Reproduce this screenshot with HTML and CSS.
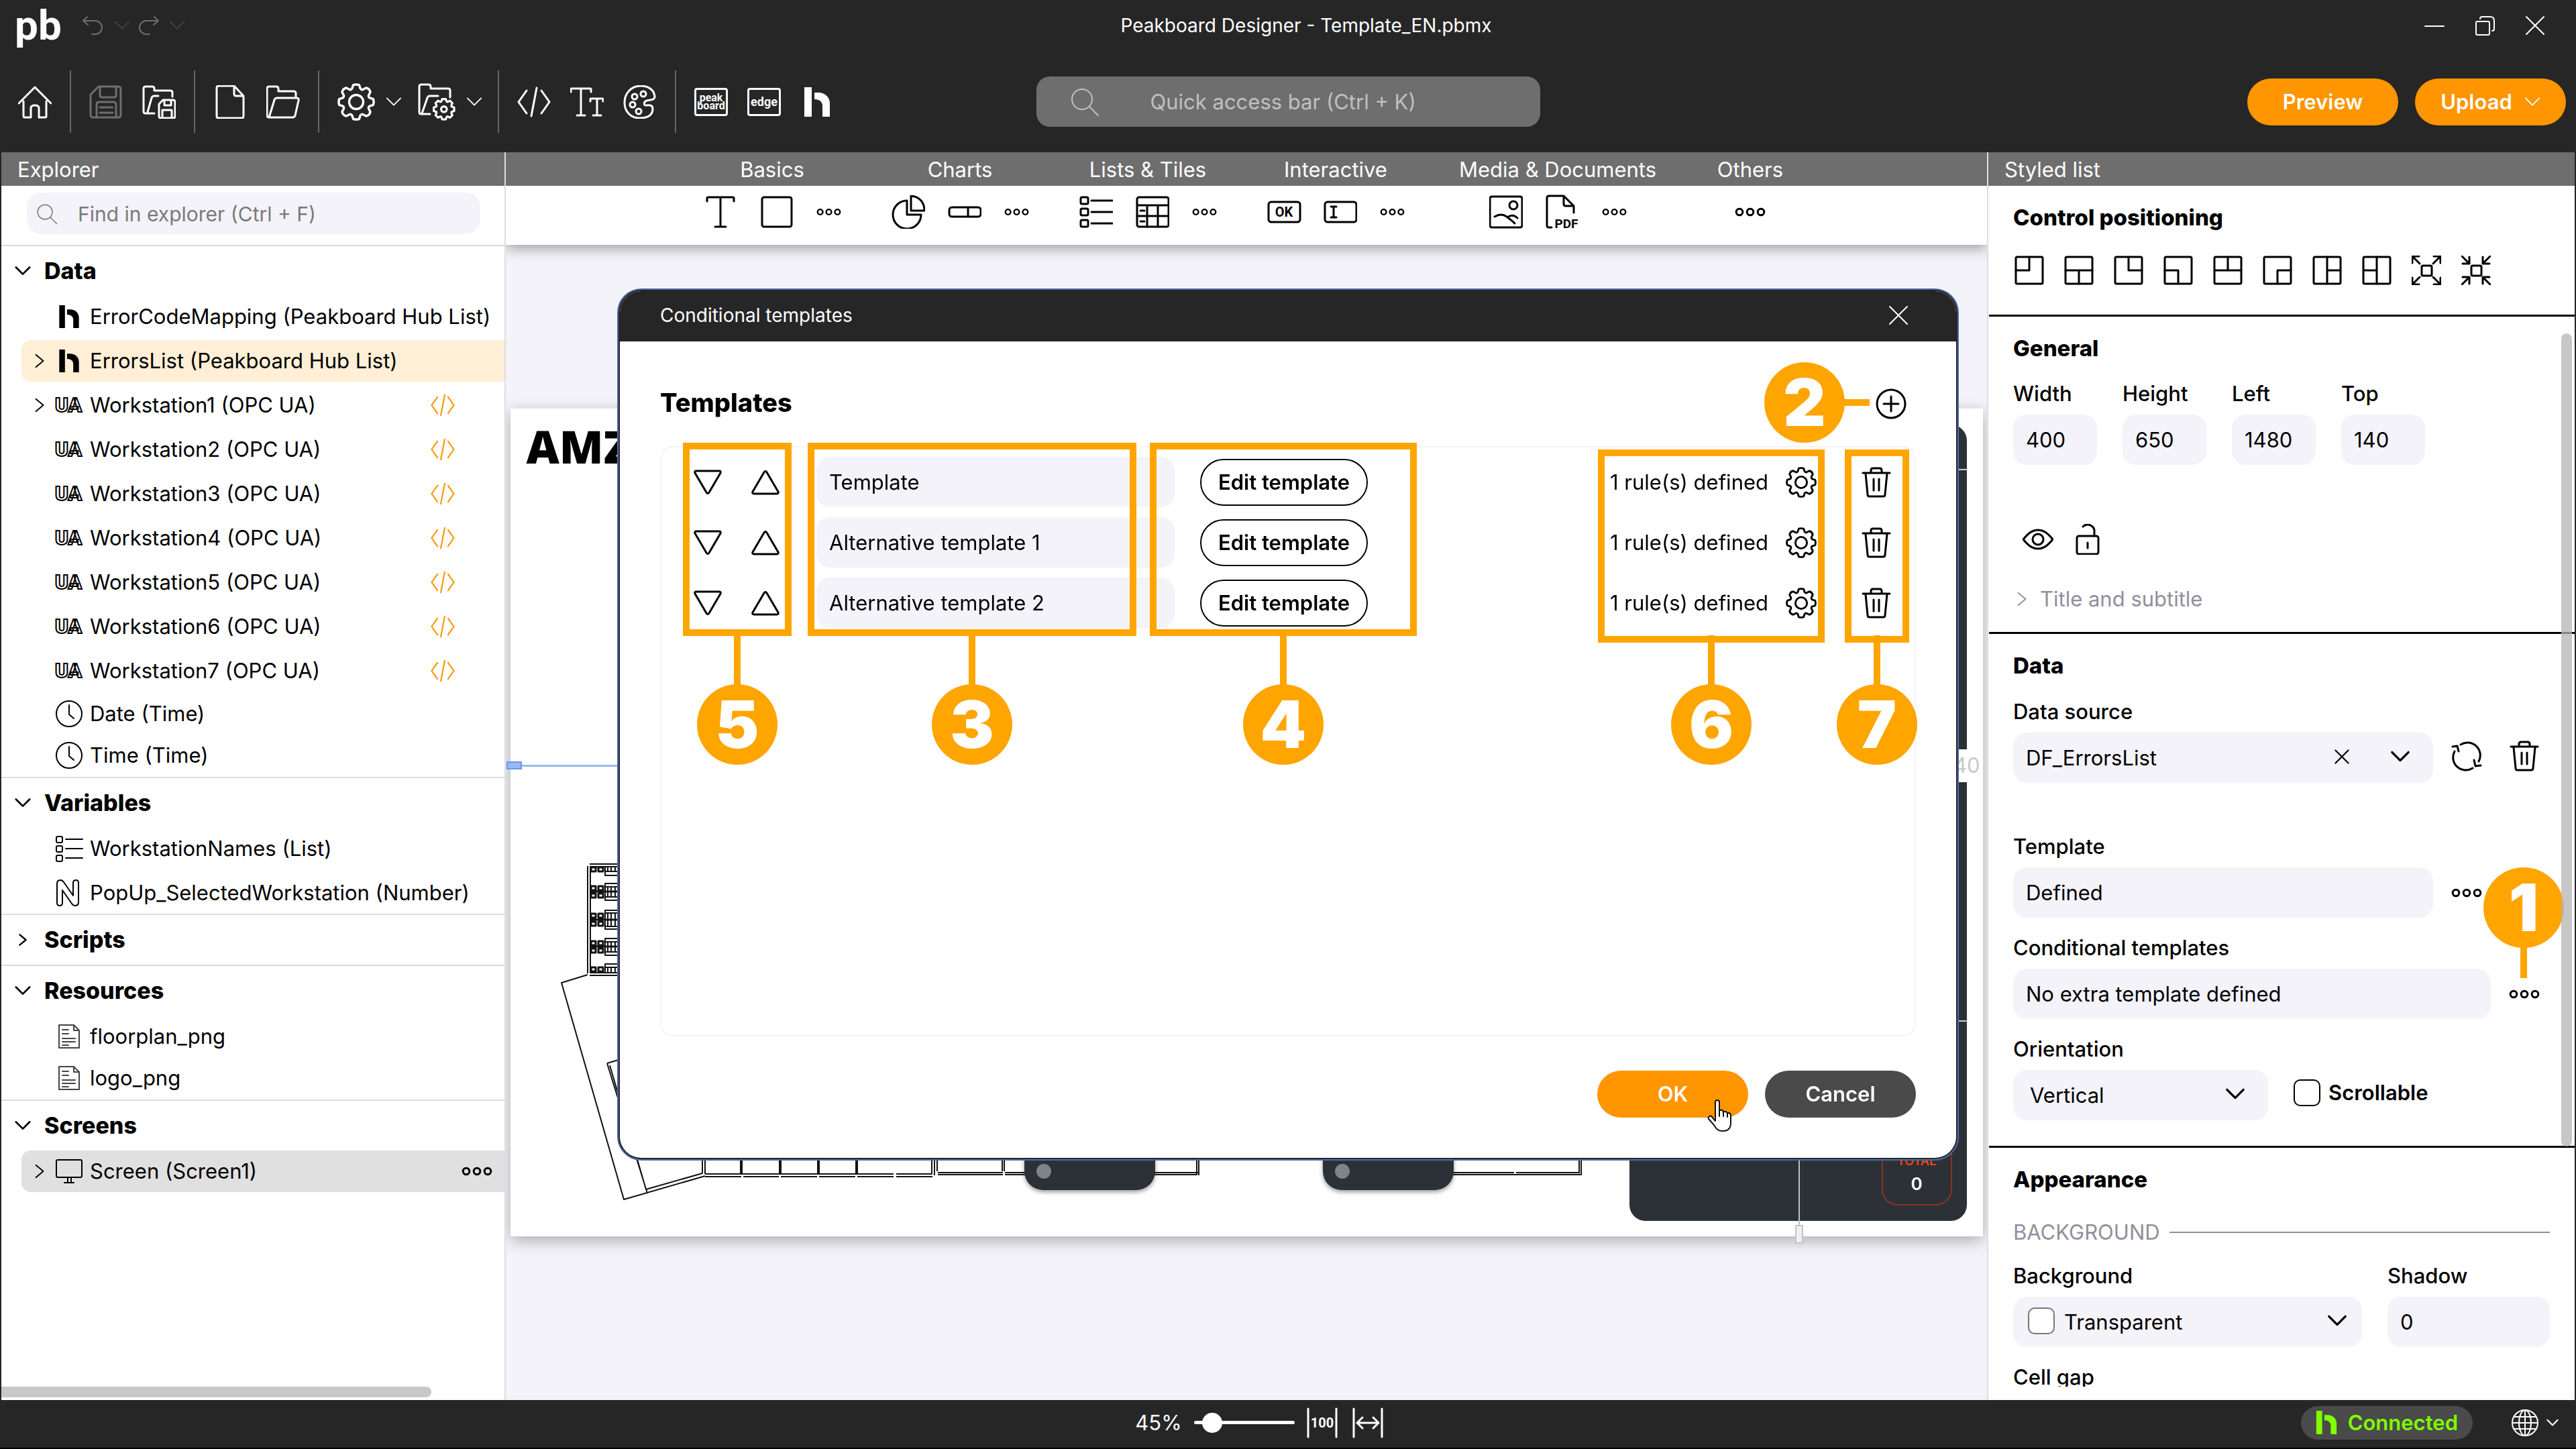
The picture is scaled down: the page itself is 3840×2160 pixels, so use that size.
FILE: index.html
```html
<!DOCTYPE html>
<html lang="en">
<head>
<meta charset="utf-8">
<title>Peakboard Designer - Template_EN.pbmx</title>
<link rel="stylesheet" href="styles.css">
</head>
<body>
<svg class="sprite" aria-hidden="true">
  <symbol id="chev-down" viewBox="0 0 26 18"><path d="M2 3l11 11L24 3"/></symbol>
  <symbol id="chev-right" viewBox="0 0 18 26"><path d="M3 3l12 10L3 23"/></symbol>
  <symbol id="undo" viewBox="0 0 34 30"><path d="M8 2L2 8l7 6M2 8h18a9 9 0 0 1 0 20h-5"/></symbol>
  <symbol id="redo" viewBox="0 0 34 30"><path d="M26 2l6 6-7 6M32 8H14a9 9 0 0 0 0 20h5"/></symbol>
  <symbol id="home" viewBox="0 0 50 50"><path d="M1 27L25 3l24 24M8 24v22q0 2 2 2h9V34q0-4 6-4t6 4v14h9q2 0 2-2V24"/></symbol>
  <symbol id="save" viewBox="0 0 50 50"><path d="M14 2h29q4 0 4 4v38q0 4-4 4H6q-4 0-4-4V14zM16 3v12q0 3 3 3h18q3 0 3-3V3M11 47V29q0-4 4-4h21q4 0 4 4v18M16 33h19M16 41h19"/></symbol>
  <symbol id="save-as" viewBox="0 0 50 50"><path d="M18 42H5q-3 0-3-3V5q0-3 3-3h10q3 0 3 3v3h24q3 0 3 3v6M8 40l6-21q1-3 4-3h6M31 22h15q3 0 3 3v21q0 3-3 3H28q-3 0-3-3V28zM33 23v7h10v-7M30 48V37h14v11"/></symbol>
  <symbol id="file" viewBox="0 0 50 50"><path d="M8 1h23l14 15v30q0 3-3 3H8q-3 0-3-3V4q0-3 3-3zM31 2v11q0 3 3 3h11"/></symbol>
  <symbol id="folder" viewBox="0 0 50 50"><path d="M4 48q-3 0-3-3V5q0-3 3-3h11q3 0 3 3v4h23q3 0 3 3v7M4 48l8-26q1-3 4-3h29q4 0 3 4l-5 22q-1 3-4 3H4z"/></symbol>
  <symbol id="gear" viewBox="0 0 48 48"><path d="M18.700 6.800L20.200 2.300Q24 1 27.800 2.300L29.300 6.800Q31 9 32.400 8.100L36.700 6Q41 7 42 11.300L39.900 15.600Q39.500 18 41.200 18.700L45.700 20.200Q47 24 45.700 27.800L41.200 29.300Q39.500 30 39.900 32.400L42 36.700Q41 41 36.700 42L32.400 39.900Q31 39 29.300 41.200L27.800 45.700Q24 47 20.200 45.700L18.700 41.200Q17 39 15.600 39.900L11.300 42Q7 41 6 36.700L8.100 32.400Q8.500 30 6.800 29.300L2.300 27.800Q1 24 2.300 20.200L6.800 18.700Q8.500 18 8.100 15.600L6 11.300Q7 7 11.300 6L15.600 8.100Q17 9 18.700 6.800z"/><circle cx="24" cy="24" r="9"/></symbol>
  <symbol id="folder-gear" viewBox="0 0 56 56"><path d="M18 46H5q-3 0-3-3V5q0-3 3-3h11q3 0 3 3v3h26q3 0 3 3v10M6 45l8-23q1-3 4-3h12"/><g transform="translate(22 22) scale(.7)"><path stroke-width="4.500" d="M18.700 6.800L20.200 2.300h7.600L29.300 6.800Q31 9 32.400 8.100L36.700 6 42 11.300 39.900 15.600Q39.500 18 41.200 18.700L45.700 20.200v7.600L41.200 29.300Q39.500 30 39.900 32.400L42 36.700 36.700 42 32.400 39.900Q31 39 29.300 41.200L27.800 45.700h-7.600L18.700 41.200Q17 39 15.600 39.900L11.300 42 6 36.700 8.100 32.400Q8.500 30 6.800 29.300L2.300 27.800v-7.600L6.800 18.700Q8.500 18 8.100 15.600L6 11.300 11.300 6 15.600 8.100Q17 9 18.700 6.800z"/><circle cx="24" cy="24" r="6" stroke-width="4.500"/></g></symbol>
  <symbol id="code" viewBox="0 0 50 50"><path d="M14 8L2 25l12 17M36 8l12 17-12 17M29 4L21 46"/></symbol>
  <symbol id="type" viewBox="0 0 50 50"><path d="M1 10V6q0-1 1-1h28q1 0 1 1v4M16 5v40M10 45h12M30 24v-3q0-1 1-1h17q1 0 1 1v3M40 20v25M34 45h12"/></symbol>
  <symbol id="palette" viewBox="0 0 50 50"><path d="M26 1C12 1 2 12 2 26s10 23 22 23c10 0 20-3 20-14 0-5-5-6-9-5-5 1-5-5 0-7 6-1 12-1 12-6C46 7 38 1 26 1z"/><circle cx="17" cy="17" r="4"/><circle cx="30" cy="13" r="4"/><circle cx="14" cy="29" r="4"/><circle cx="23" cy="39" r="4"/></symbol>
  <symbol id="hub" viewBox="0 0 40 44"><path class="solid" d="M1 0h11v44H1zM16 8h6c10 0 17 7 17 16v20H28V28c0-6-4-10-12-10z"/></symbol>
  <symbol id="search" viewBox="0 0 44 44"><circle cx="18" cy="18" r="15"/><path d="M29 29l13 13"/></symbol>
  <symbol id="dots" viewBox="0 0 46 14"><circle cx="7" cy="7" r="4.800"/><circle cx="23" cy="7" r="4.800"/><circle cx="39" cy="7" r="4.800"/></symbol>
  <symbol id="clock" viewBox="0 0 42 42"><circle cx="21" cy="21" r="19"/><path d="M21 8v14l7 6"/></symbol>
  <symbol id="num" viewBox="0 0 42 42"><path d="M3 7q0-5 5-5 3 0 5 3l14 20V6q0-4 4-4t4 4v29q0 5-5 5-3 0-5-3L11 17v19q0 4-4 4t-4-4z"/></symbol>
  <symbol id="list" viewBox="0 0 42 42"><rect x="2" y="3" width="9" height="9" rx="2"/><rect x="2" y="17" width="9" height="9" rx="2"/><rect x="2" y="31" width="9" height="9" rx="2"/><path d="M16 7h25M16 21h25M16 35h25"/></symbol>
  <symbol id="doc" viewBox="0 0 42 42"><path d="M6 4h22l8 8v26H6zM28 4v8h8M11 11h9M11 17h9M11 24h19M11 29h19M11 34h9"/></symbol>
  <symbol id="monitor" viewBox="0 0 42 42"><rect x="2" y="4" width="38" height="26" rx="2"/><path d="M19 30v7M24 30v7M14 38h14"/></symbol>
  <symbol id="t-text" viewBox="0 0 50 50"><path d="M5 9V4q0-1 2-1h36q2 0 2 1v5M25 3v44M17 47h16"/></symbol>
  <symbol id="t-rect" viewBox="0 0 50 50"><rect x="3" y="3" width="44" height="44" rx="3"/></symbol>
  <symbol id="t-pie" viewBox="0 0 50 50"><path d="M23 8a21 21 0 1 0 21 21H23zM29 1v22h20C49 10 41 2 29 1z"/></symbol>
  <symbol id="t-bar" viewBox="0 0 50 50"><rect x="2" y="18" width="47" height="14" rx="4"/><path d="M30 18v14"/></symbol>
  <symbol id="t-list" viewBox="0 0 50 50"><rect x="2" y="3" width="11" height="10" rx="2"/><rect x="2" y="20" width="11" height="10" rx="2"/><rect x="2" y="37" width="11" height="10" rx="2"/><path d="M18 8h31M18 25h31M18 42h31"/></symbol>
  <symbol id="t-table" viewBox="0 0 50 50"><rect x="2" y="3" width="47" height="44" rx="3"/><path d="M2 15h47M2 31h47M17 15v32M33 15v32M7 23h6M7 39h6"/></symbol>
  <symbol id="t-input" viewBox="0 0 50 50"><rect x="2" y="10" width="47" height="30" rx="4"/><path d="M15 17v16M11 17h8M11 33h8"/></symbol>
  <symbol id="t-image" viewBox="0 0 50 50"><rect x="1" y="2" width="48" height="46" rx="3"/><circle cx="36" cy="15" r="6"/><path d="M8 32q10-6 18 0t12 10M27 33q8-6 15 1"/></symbol>
  <symbol id="p-tl" viewBox="0 0 44 44"><rect x="2" y="2" width="40" height="40" rx="2"/><path d="M22 2v20H2"/></symbol>
  <symbol id="p-b" viewBox="0 0 44 44"><rect x="2" y="2" width="40" height="40" rx="2"/><path d="M2 22h40M22 22v20"/></symbol>
  <symbol id="p-tr" viewBox="0 0 44 44"><rect x="2" y="2" width="40" height="40" rx="2"/><path d="M22 2v20h20"/></symbol>
  <symbol id="p-bl" viewBox="0 0 44 44"><rect x="2" y="2" width="40" height="40" rx="2"/><path d="M2 22h20v20"/></symbol>
  <symbol id="p-t" viewBox="0 0 44 44"><rect x="2" y="2" width="40" height="40" rx="2"/><path d="M2 22h40M22 2v20"/></symbol>
  <symbol id="p-br" viewBox="0 0 44 44"><rect x="2" y="2" width="40" height="40" rx="2"/><path d="M42 22H22v20"/></symbol>
  <symbol id="p-r" viewBox="0 0 44 44"><rect x="2" y="2" width="40" height="40" rx="2"/><path d="M22 2v40M22 22h20"/></symbol>
  <symbol id="p-l" viewBox="0 0 44 44"><rect x="2" y="2" width="40" height="40" rx="2"/><path d="M22 2v40M2 22h20"/></symbol>
  <symbol id="p-out" viewBox="0 0 44 44"><rect x="15" y="15" width="15" height="15" rx="2"/><path d="M1 11V1h10M1 1l11 11M33 1h10v10M43 1L32 12M1 33v10h10M1 43l11-11M43 33v10H33M43 43L32 32"/></symbol>
  <symbol id="p-in" viewBox="0 0 44 44"><rect x="15" y="15" width="15" height="15" rx="2"/><path d="M2 12h10V2M12 12L1 1M42 12H32V2M32 12L43 1M2 32h10v10M12 32L1 43M42 32H32v10M32 32l11 11"/></symbol>
  <symbol id="eye" viewBox="0 0 46 46"><path d="M1 23C10 12 16 9 23 9s13 3 22 14c-9 11-15 14-22 14S10 34 1 23z"/><circle cx="23" cy="23" r="8"/></symbol>
  <symbol id="lock" viewBox="0 0 46 46"><rect x="7" y="18" width="32" height="27" rx="3"/><path d="M33 18v-6a10 10 0 0 0-17-8M23 28v8"/></symbol>
  <symbol id="refresh" viewBox="0 0 46 46"><path d="M32 41A19 19 0 0 1 5 16M14 6a19 19 0 0 1 27 25M2 9l7-1 2 8M44 37l-8 1-2-9"/></symbol>
  <symbol id="trash" viewBox="0 0 46 46"><path d="M3 9h40M15 8V5q0-3 3-3h10q3 0 3 3v3M7 10l3 31q0 3 3 3h20q3 0 3-3l3-31M19 18v17M27 18v17"/></symbol>
  <symbol id="cross" viewBox="0 0 30 30"><path d="M2 2l26 26M28 2L2 28"/></symbol>
  <symbol id="plus" viewBox="0 0 46 46"><circle cx="23" cy="23" r="21"/><path d="M23 12v22M12 23h22"/></symbol>
  <symbol id="tri-down" viewBox="0 0 42 38"><path d="M4 2h34q3 0 2 3L23 34q-2 3-4 0L2 5q-1-3 2-3z"/></symbol>
  <symbol id="tri-up" viewBox="0 0 42 38"><path d="M4 36h34q3 0 2-3L23 4q-2-3-4 0L2 33q-1 3 2 3z"/></symbol>
  <symbol id="min" viewBox="0 0 30 30"><path d="M1 16h28"/></symbol>
  <symbol id="restore" viewBox="0 0 30 30"><rect x="2" y="9" width="20" height="20" rx="2"/><path d="M8 5q0-3 3-3h12q6 0 6 6v12q0 3-3 3"/></symbol>
  <symbol id="zfit" viewBox="0 0 46 46"><path d="M2 2v42M44 2v42M7 23h32M15 15l-8 8 8 8M31 15l8 8-8 8"/></symbol>
  <symbol id="globe" viewBox="0 0 42 42"><circle cx="21" cy="21" r="19"/><ellipse cx="21" cy="21" rx="9" ry="19"/><path d="M21 2v38M2 21h38M5 12h32M5 30h32"/></symbol>
</svg>

<header class="top">
  <div class="titlebar">
    <div class="titlebar-left">
      <span class="logo">pb</span>
      <button class="icon-btn dim" aria-label="Undo"><svg class="i34"><use href="#undo"/></svg><svg class="chev"><use href="#chev-down"/></svg></button>
      <button class="icon-btn dim" aria-label="Redo"><svg class="i34"><use href="#redo"/></svg><svg class="chev"><use href="#chev-down"/></svg></button>
    </div>
    <div class="app-title">Peakboard Designer - Template_EN.pbmx</div>
    <div class="window-buttons">
      <button class="icon-btn" aria-label="Minimize"><svg class="i30"><use href="#min"/></svg></button>
      <button class="icon-btn" aria-label="Restore"><svg class="i30"><use href="#restore"/></svg></button>
      <button class="icon-btn" aria-label="Close"><svg class="i30"><use href="#cross"/></svg></button>
    </div>
  </div>
  <div class="toolbar">
    <div class="tool-groups">
      <div class="tool-group"><button class="icon-btn" aria-label="Home"><svg class="i50"><use href="#home"/></svg></button></div>
      <div class="tool-group"><button class="icon-btn dim" aria-label="Save"><svg class="i50"><use href="#save"/></svg></button><button class="icon-btn" aria-label="Save as"><svg class="i50"><use href="#save-as"/></svg></button></div>
      <div class="tool-group"><button class="icon-btn" aria-label="New"><svg class="i50"><use href="#file"/></svg></button><button class="icon-btn" aria-label="Open"><svg class="i50"><use href="#folder"/></svg></button></div>
      <div class="tool-group tool-group--menus"><button class="icon-btn menu" aria-label="Settings"><svg class="i56"><use href="#gear"/></svg><svg class="chev"><use href="#chev-down"/></svg></button><button class="icon-btn menu" aria-label="Project settings"><svg class="i56"><use href="#folder-gear"/></svg><svg class="chev"><use href="#chev-down"/></svg></button></div>
      <div class="tool-group"><button class="icon-btn" aria-label="Script"><svg class="i50"><use href="#code"/></svg></button><button class="icon-btn" aria-label="Fonts"><svg class="i50"><use href="#type"/></svg></button><button class="icon-btn" aria-label="Colors"><svg class="i50"><use href="#palette"/></svg></button></div>
      <div class="tool-group tool-group--last"><button class="icon-btn tile" aria-label="Peakboard"><span>peak</span><span>board</span></button><button class="icon-btn tile tile--edge" aria-label="Edge"><span>edge</span></button><button class="icon-btn" aria-label="Hub"><svg class="i50 hub-lg"><use href="#hub"/></svg></button></div>
    </div>
    <label class="quick"><svg class="i44"><use href="#search"/></svg><input type="text" placeholder="Quick access bar (Ctrl + K)" aria-label="Quick access bar"></label>
    <div class="actions">
      <button class="pill orange">Preview</button>
      <button class="pill orange">Upload <svg class="chev"><use href="#chev-down"/></svg></button>
    </div>
  </div>
</header>

<main class="work">
  <aside class="explorer">
    <h2 class="panel-title">Explorer</h2>
    <div class="find"><label class="find-box"><svg class="i32"><use href="#search"/></svg><input type="text" placeholder="Find in explorer (Ctrl + F)" aria-label="Find in explorer"></label></div>
    <section class="tree">
      <h3><svg class="chev"><use href="#chev-down"/></svg>Data</h3>
      <ul class="loose">
        <li><svg class="tw"></svg><svg class="i42 hub"><use href="#hub"/></svg><span>ErrorCodeMapping (Peakboard Hub List)</span></li>
        <li class="picked"><svg class="tw"><use href="#chev-right"/></svg><svg class="i42 hub"><use href="#hub"/></svg><span>ErrorsList (Peakboard Hub List)</span></li>
        <li><svg class="tw"><use href="#chev-right"/></svg><b class="ua">UA</b><span>Workstation1 (OPC UA)</span><button class="icon-btn code" aria-label="Script"><svg class="i36"><use href="#code"/></svg></button></li>
        <li><svg class="tw"></svg><b class="ua">UA</b><span>Workstation2 (OPC UA)</span><button class="icon-btn code" aria-label="Script"><svg class="i36"><use href="#code"/></svg></button></li>
        <li><svg class="tw"></svg><b class="ua">UA</b><span>Workstation3 (OPC UA)</span><button class="icon-btn code" aria-label="Script"><svg class="i36"><use href="#code"/></svg></button></li>
        <li><svg class="tw"></svg><b class="ua">UA</b><span>Workstation4 (OPC UA)</span><button class="icon-btn code" aria-label="Script"><svg class="i36"><use href="#code"/></svg></button></li>
        <li><svg class="tw"></svg><b class="ua">UA</b><span>Workstation5 (OPC UA)</span><button class="icon-btn code" aria-label="Script"><svg class="i36"><use href="#code"/></svg></button></li>
        <li><svg class="tw"></svg><b class="ua">UA</b><span>Workstation6 (OPC UA)</span><button class="icon-btn code" aria-label="Script"><svg class="i36"><use href="#code"/></svg></button></li>
        <li><svg class="tw"></svg><b class="ua">UA</b><span>Workstation7 (OPC UA)</span><button class="icon-btn code" aria-label="Script"><svg class="i36"><use href="#code"/></svg></button></li>
      </ul>
      <ul class="tight">
        <li><svg class="tw"></svg><svg class="i42"><use href="#clock"/></svg><span>Date (Time)</span></li>
        <li><svg class="tw"></svg><svg class="i42"><use href="#clock"/></svg><span>Time (Time)</span></li>
      </ul>
    </section>
    <section class="tree">
      <h3><svg class="chev"><use href="#chev-down"/></svg>Variables</h3>
      <ul class="loose">
        <li><svg class="tw"></svg><svg class="i42"><use href="#list"/></svg><span>WorkstationNames (List)</span></li>
        <li><svg class="tw"></svg><svg class="i42"><use href="#num"/></svg><span>PopUp_SelectedWorkstation (Number)</span></li>
      </ul>
    </section>
    <section class="tree">
      <h3><svg class="chev"><use href="#chev-right"/></svg>Scripts</h3>
    </section>
    <section class="tree">
      <h3><svg class="chev"><use href="#chev-down"/></svg>Resources</h3>
      <ul class="tight">
        <li><svg class="tw"></svg><svg class="i42 docs"><use href="#doc"/></svg><span>floorplan_png</span></li>
        <li><svg class="tw"></svg><svg class="i42 docs"><use href="#doc"/></svg><span>logo_png</span></li>
      </ul>
    </section>
    <section class="tree tree--last">
      <h3><svg class="chev"><use href="#chev-down"/></svg>Screens</h3>
      <ul>
        <li class="current"><svg class="tw"><use href="#chev-right"/></svg><svg class="i42"><use href="#monitor"/></svg><span>Screen (Screen1)</span><button class="icon-btn more" aria-label="More"><svg class="dots"><use href="#dots"/></svg></button></li>
      </ul>
    </section>
    <div class="hscroll"></div>
  </aside>

  <section class="canvas">
    <nav class="ribbon">
      <div class="ribbon-group"><h2>Basics</h2><div class="ribbon-tools"><svg class="i50"><use href="#t-text"/></svg><svg class="i50"><use href="#t-rect"/></svg><svg class="dots-sm"><use href="#dots"/></svg></div></div>
      <div class="ribbon-group"><h2>Charts</h2><div class="ribbon-tools"><svg class="i50"><use href="#t-pie"/></svg><svg class="i50"><use href="#t-bar"/></svg><svg class="dots-sm"><use href="#dots"/></svg></div></div>
      <div class="ribbon-group"><h2>Lists &amp; Tiles</h2><div class="ribbon-tools"><svg class="i50"><use href="#t-list"/></svg><svg class="i50"><use href="#t-table"/></svg><svg class="dots-sm"><use href="#dots"/></svg></div></div>
      <div class="ribbon-group"><h2>Interactive</h2><div class="ribbon-tools"><svg class="i50" viewBox="0 0 50 50"><rect x="2" y="10" width="47" height="30" rx="4"/><text class="glyph" x="25" y="32" font-size="20">OK</text></svg><svg class="i50"><use href="#t-input"/></svg><svg class="dots-sm"><use href="#dots"/></svg></div></div>
      <div class="ribbon-group ribbon-group--wide"><h2>Media &amp; Documents</h2><div class="ribbon-tools"><svg class="i50"><use href="#t-image"/></svg><svg class="i50" viewBox="0 0 50 50"><path d="M9 48H5q-3 0-3-3V4q0-3 3-3h22l15 15v10M27 1v12q0 3 3 3h12"/><text class="glyph" x="31" y="49" font-size="19">PDF</text></svg><svg class="dots-sm"><use href="#dots"/></svg></div></div>
      <div class="ribbon-group ribbon-group--slim"><h2>Others</h2><div class="ribbon-tools"><svg class="dots"><use href="#dots"/></svg></div></div>
    </nav>
    <div class="stage">
      <div class="board">
        <svg class="plan" viewBox="760 609 2195 1234">
          <g fill="none" stroke="#111" stroke-width="2">
            <path d="M875 1453l-39 12 93 323 121-35M875 1291v160M879 1293v157M878 1288h60M878 1292h60M878 1450h60M878 1454h60"/>
            <path d="M904 1585l60 194M908 1588l54 185 84-24v-40M904 1585l40-12M1050 1709v41M1050 1750h281M1335 1750h53v-41M1050 1754h54M1107 1754h53M1163 1754h54M1220 1754h54M1277 1754h54M1335 1754h54"/>
            <path d="M1392 1709v43M1396 1709v37M1397 1748h97M1397 1751h97M1493 1709v37M1496 1709v37M1497 1748h289M1497 1751h285M1783 1709v43M1786 1709v43M2160 1748h96M2259 1748h94M2160 1751h196v-42M2353 1709v40"/>
            <path stroke-width="4" d="M1104 1709v41M1162 1709v41M1219 1709v41M1276 1709v41"/>
            <path stroke-width="3" d="M880 1293h7v6h-7zM891 1293h7v6h-7zM880 1321h7v6h-7zM891 1321h7v6h-7zM880 1332h7v6h-7zM891 1332h7v6h-7zM880 1362h7v6h-7zM891 1362h7v6h-7zM880 1374h7v6h-7zM891 1374h7v6h-7zM880 1403h7v6h-7zM891 1403h7v6h-7zM880 1414h7v6h-7zM891 1414h7v6h-7zM880 1442h7v6h-7zM891 1442h7v6h-7zM879 1329h60M879 1371h60M879 1411h60"/>
            <path d="M901 1292v13h30M901 1299h30M905 1292v8M910 1292v8M916 1292v8M930 1317h-29v25h29M901 1322h30M901 1337h30M905 1322v15M910 1322v15M916 1322v15M930 1357h-29v28h29M901 1361h30M901 1381h30M905 1361v20M910 1361v20M916 1361v20M930 1399h-29v25h29M901 1404h30M901 1419h30M905 1404v15M910 1404v15M916 1404v15M930 1437h-29v12M901 1442h30M905 1442v8M910 1442v8M916 1442v8"/>
          </g>
        </svg>
        <div class="board-title">AMZ</div>
        <div class="station station--a"><i></i></div>
        <div class="station station--b"><i></i></div>
        <div class="side-panel"><div class="total"><span>TOTAL</span><b>0</b></div></div>
        <div class="guide-x"></div><div class="handle-x"></div>
        <div class="guide-y"></div><div class="handle-y"></div>
        <div class="distance">40</div>
      </div>
    </div>
  </section>

  <aside class="props">
    <h2 class="panel-title">Styled list</h2>
    <section class="block block--position">
      <h3>Control positioning</h3>
      <div class="positions">
        <button class="icon-btn" aria-label="Top left"><svg class="i44"><use href="#p-tl"/></svg></button><button class="icon-btn" aria-label="Bottom"><svg class="i44"><use href="#p-b"/></svg></button><button class="icon-btn" aria-label="Top right"><svg class="i44"><use href="#p-tr"/></svg></button><button class="icon-btn" aria-label="Bottom left"><svg class="i44"><use href="#p-bl"/></svg></button><button class="icon-btn" aria-label="Top"><svg class="i44"><use href="#p-t"/></svg></button><button class="icon-btn" aria-label="Bottom right"><svg class="i44"><use href="#p-br"/></svg></button><button class="icon-btn" aria-label="Right"><svg class="i44"><use href="#p-r"/></svg></button><button class="icon-btn" aria-label="Left"><svg class="i44"><use href="#p-l"/></svg></button><button class="icon-btn" aria-label="Expand"><svg class="i44"><use href="#p-out"/></svg></button><button class="icon-btn" aria-label="Shrink"><svg class="i44"><use href="#p-in"/></svg></button>
      </div>
    </section>
    <div class="props-scroll">
      <section class="block block--general">
        <h3>General</h3>
        <div class="quad">
          <div class="field"><label for="w">Width</label><input class="box" id="w" value="400"></div>
          <div class="field"><label for="h">Height</label><input class="box" id="h" value="650"></div>
          <div class="field"><label for="l">Left</label><input class="box" id="l" value="1480"></div>
          <div class="field"><label for="t">Top</label><input class="box" id="t" value="140"></div>
        </div>
        <div class="toggles"><button class="icon-btn" aria-label="Visible"><svg class="i46"><use href="#eye"/></svg></button><button class="icon-btn" aria-label="Unlocked"><svg class="i46"><use href="#lock"/></svg></button></div>
        <button class="fold"><svg class="tw"><use href="#chev-right"/></svg>Title and subtitle</button>
      </section>
      <section class="block block--data">
        <h3>Data</h3>
        <div class="field field--source"><label for="ds">Data source</label>
          <div class="line"><div class="select"><select class="box" id="ds"><option>DF_ErrorsList</option></select><button class="clear icon-btn" aria-label="Clear"><svg class="i22"><use href="#cross"/></svg></button><svg class="caret"><use href="#chev-down"/></svg></div><button class="icon-btn" aria-label="Reload"><svg class="i46"><use href="#refresh"/></svg></button><button class="icon-btn" aria-label="Delete"><svg class="i46"><use href="#trash"/></svg></button></div></div>
        <div class="field"><label for="tp">Template</label>
          <div class="line line--template"><input class="box" id="tp" value="Defined"><button class="icon-btn" aria-label="Edit template"><svg class="dots"><use href="#dots"/></svg></button></div></div>
        <div class="field"><label for="ct">Conditional templates</label>
          <div class="line"><input class="box" id="ct" value="No extra template defined"><button class="icon-btn marked" aria-label="Edit conditional templates"><svg class="dots"><use href="#dots"/></svg><span class="badge badge--1">1</span></button></div></div>
        <div class="field"><label for="or">Orientation</label>
          <div class="line line--orient"><div class="select select--short"><select class="box" id="or"><option>Vertical</option></select><svg class="caret"><use href="#chev-down"/></svg></div><label class="check"><input type="checkbox">Scrollable</label></div></div>
      </section>
      <section class="block block--look">
        <h3>Appearance</h3>
        <div class="rule-title"><span>BACKGROUND</span></div>
        <div class="pair">
          <div class="field"><label for="bg">Background</label><div class="select select--swatch"><span class="swatch"></span><select class="box" id="bg"><option>Transparent</option></select><svg class="caret"><use href="#chev-down"/></svg></div></div>
          <div class="field"><label for="sh">Shadow</label><input class="box" id="sh" value="0"></div>
        </div>
        <div class="field"><label for="cg">Cell gap</label></div>
      </section>
      <div class="vscroll"></div>
    </div>
  </aside>
</main>

<footer class="status">
  <div class="zoom"><label for="zoom">45%</label><input id="zoom" type="range" min="0" max="100" value="10"><button class="icon-btn" aria-label="Actual size"><svg class="i46" viewBox="0 0 46 46"><path d="M2 2v42M44 2v42"/><text class="glyph" x="23" y="30" font-size="20">100</text></svg></button><button class="icon-btn" aria-label="Fit"><svg class="i46"><use href="#zfit"/></svg></button></div>
  <div class="status-right"><span class="connected"><svg class="hub-sm"><use href="#hub"/></svg>Connected</span><button class="icon-btn lang" aria-label="Language"><svg class="i42"><use href="#globe"/></svg><svg class="chev-sm"><use href="#chev-down"/></svg></button></div>
</footer>

<div class="dialog" role="dialog" aria-label="Conditional templates">
  <div class="dialog-inner">
    <header class="dialog-head"><span>Conditional templates</span><button class="icon-btn" aria-label="Close"><svg class="i30"><use href="#cross"/></svg></button></header>
    <div class="dialog-body">
      <div class="dialog-title"><h2>Templates</h2><button class="icon-btn" aria-label="Add template"><svg class="i46"><use href="#plus"/></svg></button></div>
      <ul class="templates">
        <li><button class="icon-btn" aria-label="Move down"><svg class="tri"><use href="#tri-down"/></svg></button><button class="icon-btn up" aria-label="Move up"><svg class="tri"><use href="#tri-up"/></svg></button><input class="box name" aria-label="Template name" value="Template"><button class="edit">Edit template</button><span class="rules">1 rule(s) defined</span><button class="icon-btn" aria-label="Rules"><svg class="i46"><use href="#gear"/></svg></button><button class="icon-btn del" aria-label="Delete"><svg class="i46"><use href="#trash"/></svg></button></li>
        <li><button class="icon-btn" aria-label="Move down"><svg class="tri"><use href="#tri-down"/></svg></button><button class="icon-btn up" aria-label="Move up"><svg class="tri"><use href="#tri-up"/></svg></button><input class="box name" aria-label="Template name" value="Alternative template 1"><button class="edit">Edit template</button><span class="rules">1 rule(s) defined</span><button class="icon-btn" aria-label="Rules"><svg class="i46"><use href="#gear"/></svg></button><button class="icon-btn del" aria-label="Delete"><svg class="i46"><use href="#trash"/></svg></button></li>
        <li><button class="icon-btn" aria-label="Move down"><svg class="tri"><use href="#tri-down"/></svg></button><button class="icon-btn up" aria-label="Move up"><svg class="tri"><use href="#tri-up"/></svg></button><input class="box name" aria-label="Template name" value="Alternative template 2"><button class="edit">Edit template</button><span class="rules">1 rule(s) defined</span><button class="icon-btn" aria-label="Rules"><svg class="i46"><use href="#gear"/></svg></button><button class="icon-btn del" aria-label="Delete"><svg class="i46"><use href="#trash"/></svg></button></li>
      </ul>
      <div class="dialog-actions"><button class="pill orange">OK</button><button class="pill grey">Cancel</button></div>
    </div>
  </div>
  <div class="frame frame--5"><span class="badge">5</span></div>
  <div class="frame frame--3"><span class="badge">3</span></div>
  <div class="frame frame--4"><span class="badge">4</span></div>
  <div class="frame frame--6"><span class="badge">6</span></div>
  <div class="frame frame--7"><span class="badge">7</span></div>
  <span class="badge badge--2">2</span>
  <svg class="pointer" viewBox="0 0 36 48"><path d="M12 26V4c0-4 6-4 6 0v13c1-2 6-2 6 2 1-2 6-1 6 2 1-2 5-1 5 3v11c0 8-4 12-12 12-8 0-10-4-13-9L2 29c-2-3 3-6 5-3l5 6z" fill="#fff" stroke="#111" stroke-width="2"/><path d="M18 16v9M24 19v6M30 21v5" stroke="#111" stroke-width="2"/></svg>
</div>
</body>
</html>
```
FILE: styles.css
```css
* { box-sizing: border-box; }
body {
  margin: 0;
  height: 100vh;
  display: flex;
  flex-direction: column;
  background: #262626;
  color: #000;
  font: 400 31px/40px Inter, "Liberation Sans", sans-serif;
  overflow: hidden;
}
h2, h3, ul { margin: 0; padding: 0; font-size: inherit; }
ul { list-style: none; }
button, input, select { font: inherit; color: inherit; border: 0; background: none; padding: 0; margin: 0; }
svg { flex: none; display: block; fill: none; stroke: currentColor; stroke-width: 3; stroke-linecap: round; stroke-linejoin: round; }
.sprite { position: absolute; width: 0; height: 0; }
.solid { fill: currentColor; stroke: none; }
.glyph { fill: currentColor; stroke: none; font-family: Roboto, sans-serif; font-weight: 700; text-anchor: middle; }
.i22 { width: 22px; height: 22px; }
.i30 { width: 30px; height: 30px; stroke-width: 2; }
.i32 { width: 32px; height: 32px; }
.i34 { width: 34px; height: 30px; stroke-width: 2; }
.i36 { width: 36px; height: 36px; }
.i42 { width: 42px; height: 42px; stroke-width: 2; }
.i44 { width: 44px; height: 44px; }
.i46 { width: 46px; height: 46px; }
.i50 { width: 50px; height: 50px; overflow: visible; }
.i56 { width: 56px; height: 56px; }
.chev { width: 24px; height: 18px; stroke-width: 2; }
.chev-sm { width: 18px; height: 14px; }
.caret { width: 30px; height: 20px; }
.tw { width: 18px; height: 24px; stroke-width: 2; }
.dots { width: 46px; height: 14px; }
.dots-sm { width: 37px; height: 12px; }
.icon-btn { display: flex; align-items: center; flex: none; }

/* Header */
.top { flex: none; color: #fff; }
.titlebar { display: grid; grid-template-columns: 1fr auto 1fr; align-items: center; height: 76px; }
.titlebar-left { display: flex; align-items: center; gap: 10px; padding-left: 22px; }
.titlebar-left .icon-btn { gap: 14px; }
.logo { font: 700 62px/60px Roboto, sans-serif; padding-right: 20px; }
.dim { color: #6e6e6e; }
.dim .chev { color: #444; }
.app-title { padding-left: 54px; font-size: 28px; }
.window-buttons { display: flex; justify-content: flex-end; gap: 45px; padding-right: 46px; }
.toolbar { display: grid; grid-template-columns: 1fr 751px 1fr; align-items: center; height: 151px; }
.tool-groups { display: flex; }
.tool-group { display: flex; align-items: center; gap: 29px; height: 93px; padding: 0 27px; border-right: 2px solid #666; }
.tool-group--menus { gap: 24px; padding-right: 23px; }
.tool-group--last { border: 0; }
.menu { gap: 16px; }
.hub-lg { height: 44px; }
.tile { flex-direction: column; justify-content: center; width: 50px; height: 42px; border: 3px solid #fff; border-radius: 4px; font: 700 16px/12px Roboto, sans-serif; }
.tile--edge { font-size: 18px; }
.quick { display: flex; align-items: center; height: 75px; padding-left: 50px; gap: 76px; border-radius: 20px; background: #6e6e6e; color: #c0c0c0; }
.quick svg { stroke-width: 2; }
.quick input { flex: 1; min-width: 0; }
input::placeholder { color: inherit; opacity: 1; }
.actions { display: flex; justify-content: flex-end; gap: 25px; padding-right: 15px; }
.pill { display: flex; align-items: center; justify-content: center; gap: 18px; width: 225px; height: 70px; border-radius: 35px; color: #fff; font-weight: 600; }
.orange { background: #ff9500; }
.grey { background: #4a4a4a; }

/* Work area */
.work { flex: 1; min-height: 0; display: flex; margin: 0 2px; }
.panel-title { flex: none; height: 50px; padding: 6px 24px; background: #6e6e6e; color: #fff; font-weight: 400; }
.explorer { position: relative; flex: none; width: 752px; display: flex; flex-direction: column; background: #fff; border-right: 2px solid #dedde3; }
.find { padding: 10px 36px 16px 38px; border-bottom: 2px solid #dcdcdc; }
.find-box { display: flex; align-items: center; gap: 30px; height: 62px; padding: 2px 0 0 14px; border-radius: 22px; background: #f4f3f9; color: #7a7a7a; font-size: 30px; }
.find-box input { flex: 1; min-width: 0; }
.find-box svg { stroke-width: 2; }
.tree { border-bottom: 2px solid #dcdcdc; }
.tree--last { border: 0; }
.tree h3 { display: flex; align-items: center; gap: 20px; height: 74px; padding-left: 20px; font-size: 34px; font-weight: 800; }
.tree h3 .chev { height: 20px; stroke-width: 3; }
.tree ul { display: flex; flex-direction: column; padding-left: 30px; }
.tree li { display: flex; align-items: center; height: 62px; padding: 0 18px; border-radius: 14px 0 0 14px; white-space: nowrap; }
.tree li .i42 { margin: 0 10px 0 14px; }
.tree .hub { height: 34px; }
.ua { width: 42px; margin: 0 10px 0 14px; font: 900 30px/40px Roboto, sans-serif; color: #fff; -webkit-text-stroke: 2px #000; }
.loose { gap: 4px; }
.loose + .tight { padding-top: 2px; }
.tree .tight { padding-bottom: 1px; }
.docs { color: #444; }
.tree .picked { background: #ffefd6; }
.tree .current { background: #e0e0e0; }
.code { margin: 0 56px 0 auto; color: #ff9500; }
.more { margin-left: auto; }
.hscroll { width: 641px; height: 16px; margin: auto 0 4px; border-radius: 0 8px 8px 0; background: #c8c8c8; }

/* Canvas */
.canvas { flex: 1; min-width: 0; display: flex; flex-direction: column; background: #f4f3f9; overflow: hidden; }
.ribbon { position: relative; z-index: 1; flex: none; display: flex; justify-content: center; height: 138px; background: linear-gradient(#6e6e6e 50px, #fff 50px); box-shadow: 0 4px 20px rgba(0, 0, 0, .4); }
.ribbon-group { width: 280px; }
.ribbon-group--wide { width: 382px; }
.ribbon-group--slim { width: 192px; }
.ribbon h2 { height: 50px; padding: 6px 0; color: #fff; font-weight: 400; text-align: center; white-space: nowrap; }
.ribbon-tools { display: flex; align-items: center; justify-content: center; gap: 34px; height: 77px; }
.stage { flex: 1; display: flex; align-items: center; justify-content: center; }
.board { position: relative; flex: none; width: 2195px; height: 1234px; background: #fff; box-shadow: 0 6px 22px rgba(0, 0, 0, .3); }
.plan { width: 100%; stroke-linecap: butt; }
.board-title { position: absolute; left: 24px; top: 18px; font: 800 68px/76px "Open Sans", sans-serif; }
.station { position: absolute; top: 1080px; width: 195px; height: 85px; border-radius: 28px; background: #2b3137; box-shadow: 0 3px 6px rgba(0, 0, 0, .4); }
.station i { display: block; width: 22px; height: 22px; margin: 46px 0 0 18px; border-radius: 50%; background: #808389; }
.station--a { left: 766px; }
.station--b { left: 1211px; }
.side-panel { position: absolute; left: 1668px; top: 24px; width: 503px; height: 1187px; border-radius: 24px; background: linear-gradient(transparent 66px, #ccc 66px, #ccc 68px, transparent 68px, transparent 888px, #ccc 888px, #ccc 890px, transparent 890px), #2b3137; }
.total { position: absolute; right: 22px; bottom: 23px; width: 105px; height: 106px; border: 2px solid #8a3420; border-radius: 24px; color: #ff4500; text-align: center; font: 600 18px/24px Inter, sans-serif; }
.total span, .total b { display: block; }
.total span { padding-top: 26px; }
.total b { padding-top: 10px; color: #fff; font-size: 26px; font-weight: 600; }
.guide-x { position: absolute; left: 16px; top: 531px; width: 300px; height: 3px; background: #9ab8f4; }
.handle-x { position: absolute; left: -6px; top: 526px; width: 23px; height: 12px; border: 2px solid #6c97ea; background: #9ab8f4; }
.guide-y { position: absolute; left: 1920px; top: 1100px; width: 2px; height: 117px; background: #c0c0c0; }
.handle-y { position: absolute; left: 1915px; top: 1217px; width: 12px; height: 28px; border: 2px solid #c4c4c4; background: #f0f0f0; }
.distance { position: absolute; right: 0; top: 508px; width: 45px; padding: 4px 4px 5px 0; background: #fff; color: #c8c8c8; text-align: right; }

/* Properties */
.props { flex: none; width: 876px; display: flex; flex-direction: column; padding-bottom: 20px; border-left: 2px solid #dedde3; background: #fff; }
.props .panel-title { margin-left: -2px; border-left: 2px solid #dedde3; }
.block { margin-left: 1px; padding: 27px 37px 0 36px; border-bottom: 3px solid #000; }
.block h3 { font-size: 33px; font-weight: 800; }
.block--position { flex: none; padding-bottom: 44px; }
.positions { display: flex; gap: 30px; margin: 37px 0 0 2px; }
.props-scroll { position: relative; flex: 1; min-height: 0; overflow: hidden; }
.quad { display: flex; gap: 38px; margin-top: 28px; }
.quad .field { width: 125px; }
.field { display: flex; flex-direction: column; gap: 11px; }
.field > label { font-weight: 500; }
.box { display: block; width: 100%; min-width: 0; height: 75px; padding: 0 19px; border-radius: 20px; background: #f4f3f9; appearance: none; }
.toggles { display: flex; gap: 28px; margin: 88px 0 46px 14px; }
.fold { display: flex; align-items: center; gap: 18px; margin: 0 0 29px 4px; color: #918f9b; }
.block--data { padding-bottom: 38px; }
.block--data .field { margin-bottom: 25px; }
.block--data .field:last-child { margin-bottom: 0; }
.block--data h3 + .field { margin-top: 29px; margin-bottom: 75px; }
.line { display: flex; align-items: center; gap: 27px; padding-right: 15px; }
.line > .box, .line > .select { flex: 1; }
.line .icon-btn + .icon-btn { margin-left: 13px; }
.field--source .line > .icon-btn { padding-bottom: 6px; }
.line--template { padding-right: 101px; }
.select { position: relative; }
.select .caret { position: absolute; right: 34px; top: 26px; }
.clear { position: absolute; right: 125px; top: 25px; }
.line--orient .select { flex: none; width: 380px; }
.line--orient { gap: 38px; }
.select--short .box { padding-left: 25px; }
.check { display: flex; align-items: center; gap: 12px; padding-bottom: 8px; font-weight: 600; }
.check input { width: 40px; height: 40px; border: 2px solid #000; border-radius: 10px; appearance: none; }
.marked { position: relative; }
.block--look { border: 0; }
.rule-title { display: flex; align-items: center; gap: 14px; margin: 39px 0 25px; color: #918f9b; }
.rule-title::after { content: ""; flex: 1; height: 2px; background: #918f9b; }
.pair { display: grid; grid-template-columns: 520px 1fr; gap: 38px; margin-bottom: 25px; }
.select--swatch .box { padding-left: 76px; }
.select--swatch .caret { right: 22px; }
.swatch { position: absolute; left: 22px; top: 16px; width: 40px; height: 40px; border: 2px solid #777; border-radius: 10px; background: #fff; }
.vscroll { position: absolute; right: 4px; top: 25px; width: 16px; height: 1212px; border-radius: 8px; background: rgba(180, 180, 180, .75); }

/* Status bar */
.status { flex: none; display: grid; grid-template-columns: 1fr auto 1fr; align-items: center; height: 73px; padding: 0 26px 4px; border-bottom: 2px solid #000; color: #fff; }
.zoom { grid-column: 2; display: flex; align-items: center; margin-left: -86px; gap: 22px; }
.zoom input { width: 150px; height: 30px; appearance: none; margin-left: -4px; margin-right: -4px; }
.zoom input::-webkit-slider-runnable-track { height: 5px; border-radius: 3px; background: #fff; }
.zoom input::-webkit-slider-thumb { appearance: none; width: 30px; height: 30px; margin-top: -12px; border-radius: 50%; background: #fff; }
.status-right { display: flex; align-items: center; justify-content: flex-end; gap: 57px; }
.connected { display: flex; align-items: center; gap: 16px; height: 50px; padding: 0 22px; border-radius: 25px; background: #4a4a4a; color: #7fff00; font-weight: 600; }
.hub-sm { width: 32px; height: 35px; }
.lang { gap: 11px; }

/* Dialog */
.dialog { position: fixed; inset: 0; z-index: 2; width: 2000px; height: 1300px; margin: auto; border: 2px solid #4f6ca8; border-radius: 36px; background: #262626; padding: 2px; }
.dialog-inner { height: 100%; display: flex; flex-direction: column; overflow: hidden; border-radius: 32px; background: #fff; }
.dialog-head { flex: none; display: flex; align-items: center; justify-content: space-between; height: 75px; padding: 0 71px 4px 60px; background: #262626; color: #fff; font-size: 28px; }
.dialog-body { flex: 1; display: flex; flex-direction: column; padding: 66px 60px 60px; }
.dialog-title { display: flex; align-items: center; justify-content: space-between; height: 50px; padding-right: 14px; }
.dialog-title h2 { font-size: 38px; font-weight: 800; }
.dialog-title .icon-btn { padding-top: 4px; }
.templates { flex: 1; display: flex; flex-direction: column; gap: 15px; margin-top: 40px; padding: 14px 34px 0 48px; border: 2px solid #f4f4f6; border-radius: 20px; }
.templates li { display: flex; align-items: center; height: 75px; }
.tri { width: 42px; height: 38px; }
.templates .up { margin: 0 55px 0 44px; }
.templates .name { flex: none; width: 534px; }
.edit { width: 250px; height: 70px; margin-left: 38px; border: 2px solid #000; border-radius: 35px; font-weight: 600; white-space: nowrap; }
.rules { margin: 0 26px 0 auto; white-space: nowrap; }
.templates .del { margin-left: 66px; }
.dialog-actions { flex: none; display: flex; justify-content: flex-end; gap: 25px; margin-top: 51px; }

/* Call-outs over the dialog */
.frame { position: absolute; top: 228px; height: 288px; border: 10px solid #ffa500; }
.frame--5 { left: 96px; width: 162px; }
.frame--3 { left: 282px; width: 490px; }
.frame--4 { left: 792px; width: 398px; }
.frame--6 { left: 1460px; width: 338px; top: 238px; }
.frame--7 { left: 1828px; width: 96px; top: 238px; }
.badge { position: absolute; width: 120px; height: 120px; border-radius: 50%; background: #ffa500; color: #fff; font: 900 98px/120px Inter, sans-serif; text-align: center; }
.badge::before { content: ""; position: absolute; left: 55px; bottom: 119px; width: 10px; height: 74px; background: #ffa500; }
.frame .badge { left: calc(50% - 60px); top: 350px; }
.frame--6 .badge, .frame--7 .badge { top: 340px; }
.badge--2 { left: 1708px; top: 108px; }
.badge--2::before { left: 119px; bottom: 55px; width: 38px; height: 10px; }
.badge--1 { left: -38px; bottom: 76px; }
.badge--1::before { bottom: -45px; height: 46px; }
.pointer { position: absolute; left: 1623px; top: 1207px; width: 36px; height: 48px; }
```
